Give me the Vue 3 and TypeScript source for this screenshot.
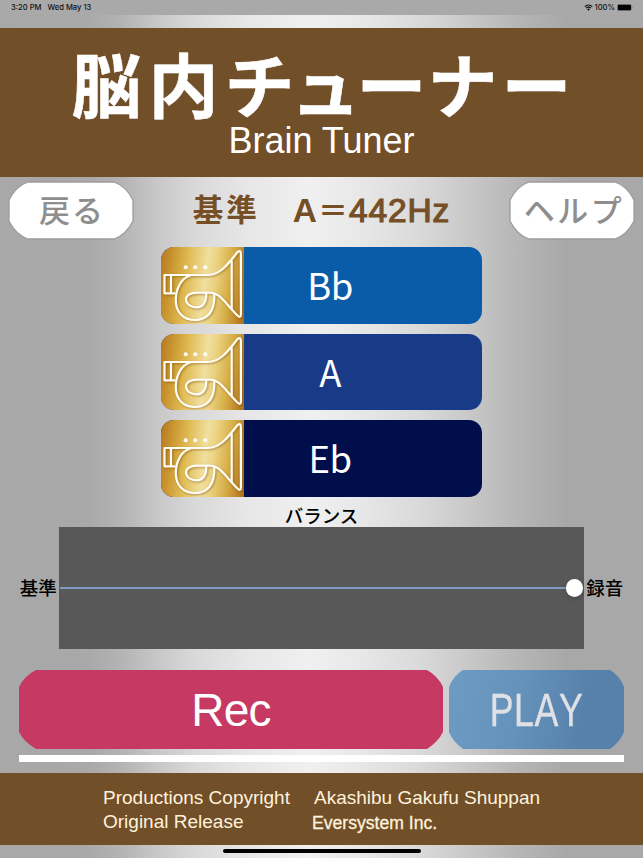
<script setup lang="ts">
interface Pitch {
  label: string
  tone: string
}

const pitches: Pitch[] = [
  { label: 'Bb', tone: 'blue' },
  { label: 'A', tone: 'royal' },
  { label: 'Eb', tone: 'navy' },
]
</script>

<template>
  <div class="screen">
    <div class="status">
      <span class="time">3:20 PM</span>
      <span class="date">Wed May 13</span>
      <svg class="wifi" width="9" height="7" viewBox="0 0 18 14">
        <path d="M1.5 5.2a11 11 0 0 1 15 0M4.3 8.2a7 7 0 0 1 9.4 0" fill="none" stroke="#111" stroke-width="2.4" />
        <path d="M9 13.6 6.2 10.6a4 4 0 0 1 5.6 0z" fill="#111" />
      </svg>
      <span class="percent">100%</span>
      <svg class="battery" width="17" height="7" viewBox="0 0 17 7">
        <rect x="0.3" y="0.3" width="14.2" height="6.4" rx="1.8" fill="none" stroke="#666" stroke-width="0.5" />
        <rect x="0.8" y="0.8" width="13.2" height="5.4" rx="1.2" fill="#000" />
        <path d="M15.3 2.4q1 1.1 0 2.2z" fill="#666" />
      </svg>
    </div>

    <header class="banner">
      <h1><span class="g1">脳</span><span class="g2">内</span><span class="g3">チ</span><span class="g4">ュ</span><span class="g5">ー</span><span class="g6">ナ</span><span>ー</span></h1>
      <p>Brain Tuner</p>
    </header>

    <nav class="toolbar">
      <button class="pill back">
        <svg width="126" height="59" viewBox="0 0 126 59">
          <path d="M20 1H106Q118 5 125 19V40Q118 54 106 58H20Q8 54 1 40V19Q8 5 20 1Z" />
        </svg>
        <span>戻る</span>
      </button>
      <div class="reference"><span class="kanji">基準</span><span class="letter">A</span><span class="equals">＝</span><span class="hertz">442Hz</span></div>
      <button class="pill help">
        <svg width="126" height="59" viewBox="0 0 126 59">
          <path d="M20 1H106Q118 5 125 19V40Q118 54 106 58H20Q8 54 1 40V19Q8 5 20 1Z" />
        </svg>
        <span>ヘルプ</span>
      </button>
    </nav>

    <main class="pitches">
      <button v-for="pitch in pitches" :key="pitch.label" class="pitch" :class="pitch.tone">
        <span class="tile">
          <svg width="83" height="77" viewBox="0 0 83 77">
            <g class="horn">
              <path d="M14.5 46.3H3.5V28H47C58 28 66 19 76.5 5Q79.7 2.500 79.9 7V67.500Q79.700 71.500 76.500 68.500C64 56 59 45.600 49 45.600H36C29 45.600 25 49 25 52.300C25 57 30 60.300 35.500 60.300C41 60.300 45.300 57 45.300 46" />
              <path d="M30 28.300C20 31 14.800 42 14.800 53C14.800 65 22 73 34 73C46 73 54 65 53.300 47M10 28V46M70.700 13.500V62.500" />
            </g>
            <g class="dots">
              <circle cx="24.700" cy="20.300" r="2" /><circle cx="34.300" cy="20.300" r="2" /><circle cx="44.300" cy="20.300" r="2" />
            </g>
          </svg>
        </span>
        <span class="name">{{ pitch.label }}</span>
      </button>
    </main>

    <section class="balance">
      <h2>バランス</h2>
      <div class="row">
        <span class="end">基準</span>
        <div class="slider"><div class="track"></div><div class="thumb"></div></div>
        <span class="end">録音</span>
      </div>
    </section>

    <div class="actions">
      <button class="rec"><span>Rec</span></button>
      <button class="play"><span>PLAY</span></button>
    </div>
    <div class="progress"></div>

    <footer class="credits">
      <div class="left"><p>Productions Copyright</p><p>Original Release</p></div>
      <div class="right"><p>Akashibu Gakufu Shuppan</p><p class="company">Eversystem Inc.</p></div>
    </footer>
    <div class="home"></div>
  </div>
</template>

<style>
body {
  margin: 0;
}
</style>

<style scoped>
.screen {
  box-sizing: border-box;
  width: 643px;
  height: 858px;
  overflow: hidden;
  display: flex;
  flex-direction: column;
  font-family: "Liberation Sans", "Noto Sans CJK JP", sans-serif;
  background: linear-gradient(90deg, #a8a8a8 0%, #a9a9a9 14%, #b4b4b4 19%, #c6c6c6 24%, #d8d8d8 30%, #e6e6e6 38%, #f0f0f0 48%, #e9e9e9 55%, #dadada 65%, #c8c8c8 73%, #b5b5b5 81%, #a8a8a8 88%, #a8a8a8 100%);
}
h1, h2, p {
  margin: 0;
}
button {
  padding: 0;
  border: 0;
  background: none;
  font-family: inherit;
}
.status {
  height: 15px;
  margin-bottom: 13px;
  flex: none;
  display: flex;
  align-items: center;
  padding: 0 9px 0 11px;
  background: #a9a9a9;
  color: #111;
  font: 500 7.600px/16px Inter, sans-serif;
}
.date {
  margin-left: 6px;
  flex: 1;
}
.percent {
  margin: 0 2px 0 2px;
}
.banner {
  height: 149px;
  flex: none;
  background: #714f28;
  color: #fff;
  text-align: center;
  white-space: nowrap;
}
h1 {
  height: 94px;
  font: 700 70px/109px "Noto Sans CJK JP", sans-serif;
  -webkit-text-stroke: 0.500px #fff;
}
.g1 { letter-spacing: 7px; }
.g2 { letter-spacing: 6px; }
.g3 { letter-spacing: -4px; }
.g4 { letter-spacing: -4px; }
.g5 { letter-spacing: 1px; }
.g6 { letter-spacing: 4px; }
.banner p {
  font-size: 36px;
  line-height: 37px;
}
.toolbar {
  height: 70px;
  flex: none;
  box-sizing: border-box;
  padding: 4px 8px 0;
  display: flex;
  justify-content: space-between;
}
.pill {
  width: 126px;
  height: 59px;
  display: grid;
  color: #8e8e8e;
  font: 500 31px/55px "Noto Sans CJK JP", sans-serif;
}
.pill > * {
  grid-area: 1 / 1;
}
.pill path {
  fill: #fff;
  stroke: #9c9c9c;
  stroke-width: 1.300px;
}
.back span {
  letter-spacing: 2px;
  padding-left: 2px;
}
.help span {
  letter-spacing: 2.500px;
  padding-left: 4px;
}
.reference {
  display: flex;
  height: 59px;
  color: #774f26;
  font: 700 30.500px/54px "Noto Sans CJK JP", sans-serif;
}
.kanji {
  letter-spacing: 3px;
  margin-right: 33px;
}
.letter, .hertz {
  font-family: "Liberation Sans", sans-serif;
  font-size: 33.500px;
  line-height: 59px;
}
.equals {
  margin: 0 0 0 1px;
  font-size: 30px;
  line-height: 55px;
}
.hertz {
  font-weight: 400;
  letter-spacing: 0.900px;
  padding-left: 1px;
  -webkit-text-stroke: 1.200px #774f26;
}
.credits {
  box-sizing: border-box;
  height: 72px;
  flex: none;
  margin-top: 11px;
  padding: 12px 0 0 103px;
  display: flex;
  background: #714f28;
  color: #fff2dd;
  font-size: 19px;
  line-height: 25px;
  white-space: nowrap;
}
.left {
  width: 211px;
}
.left p + p {
  line-height: 23px;
}
.company {
  margin-left: -2px;
  font-size: 17.600px;
  line-height: 27px;
  -webkit-text-stroke: 0.300px #fff2dd;
}
.pitches {
  flex: none;
  display: flex;
  flex-direction: column;
  align-items: center;
  gap: 10px;
}
.pitch {
  width: 321px;
  height: 76.700px;
  display: flex;
  overflow: hidden;
  border-radius: 13px;
  color: #fff;
}
.blue { background: #0a5ba8; }
.royal { background: #193a86; }
.navy { background: #000e4c; }
.tile {
  width: 83px;
  height: 77px;
  background: linear-gradient(97deg, #b47725 0%, #ca952f 14%, #e0bc55 32%, #f1df9f 52%, #ecd382 62%, #d5ad45 79%, #b97e25 94%, #a96e1d 100%);
}
.tile svg {
  display: block;
}
.horn {
  fill: none;
  stroke: #fffdf5;
  stroke-width: 2.200px;
  stroke-linejoin: round;
  filter: drop-shadow(1px 1px 1px rgba(110, 65, 0, 0.5));
}
.dots {
  fill: #fffdf5;
}
.name {
  width: 172px;
  font: 400 36.500px/76px "Noto Sans CJK JP", sans-serif;
  letter-spacing: -0.500px;
}
.balance {
  flex: none;
}
h2 {
  height: 30px;
  text-align: center;
  font: 500 18.500px/37px "Noto Sans CJK JP", sans-serif;
  color: #000;
}
.row {
  height: 121.500px;
  display: flex;
  justify-content: center;
  align-items: center;
  gap: 2px;
}
.end {
  font: 500 18.500px/24px "Noto Sans CJK JP", sans-serif;
  padding-bottom: 2px;
}
.slider {
  width: 525.500px;
  height: 121.500px;
  background: #585858;
  display: flex;
  align-items: center;
}
.track {
  flex: 1;
  height: 2px;
  margin-left: 1px;
  background: #7f9ac5;
}
.thumb {
  width: 17.500px;
  height: 17.500px;
  margin-right: 1px;
  border-radius: 50%;
  background: #fff;
  box-shadow: 0 2px 4px rgba(0, 0, 0, 0.2);
}
.actions {
  flex: none;
  margin: 21.500px 19px 0;
  display: flex;
  justify-content: space-between;
}
.actions button {
  height: 79px;
}
.rec {
  width: 424px;
  background: #c63962;
  color: #fff;
  font-size: 46px;
  line-height: 80px;
  clip-path: path("M17 0H408Q419 6 424 17V62Q419 72 408 79H17Q5 72 0 62V17Q5 6 17 0Z");
}
.rec span {
  letter-spacing: -0.700px;
}
.play {
  width: 175px;
  background: linear-gradient(100deg, #6d9bc4, #6492bb 40%, #5681aa 75%, #5681aa);
  color: #dfe1e4;
  font: 400 47px/76px "Liberation Sans", sans-serif;
  clip-path: path("M14 0H161Q171 6 175 17V62Q171 72 161 79H14Q4 72 0 62V17Q4 6 14 0Z");
}
.play span {
  display: inline-block;
  letter-spacing: 0.800px;
  padding-left: 1px;
  font-kerning: none;
  transform: scaleX(0.76);
  -webkit-text-stroke: 0.400px #dfe1e4;
}
.progress {
  height: 7px;
  flex: none;
  margin: 6px 19px 0;
  background: #fff;
}
.home {
  width: 198px;
  height: 4px;
  flex: none;
  margin: 4px auto 0;
  border-radius: 2px;
  background: #000;
}
</style>
